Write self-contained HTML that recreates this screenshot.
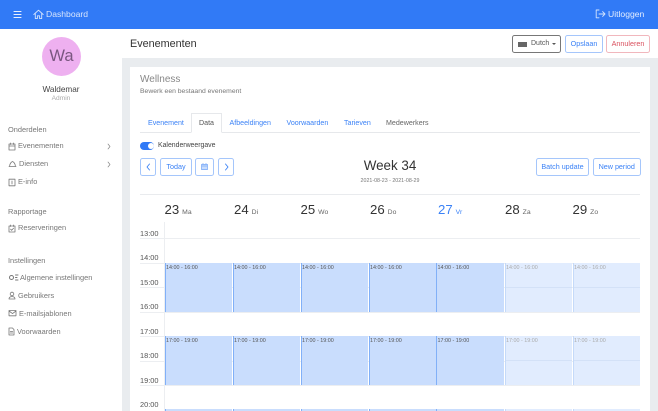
<!DOCTYPE html>
<html><head><meta charset="utf-8">
<style>
*{box-sizing:border-box}
html,body{margin:0;padding:0;width:658px;height:411px;overflow:hidden}
body{position:relative;background:#e9ecef;font-family:"Liberation Sans",sans-serif;color:#333}
.a{position:absolute;white-space:nowrap}
svg{position:absolute;fill:none;stroke-linecap:round;stroke-linejoin:round}
.nav{color:#777;font-size:7.4px;line-height:10px}
.hd{color:#777;font-size:7.4px;line-height:10px}
.btn{position:absolute;border:1px solid #a5c6fb;border-radius:2.5px;color:#3b82f6;font-size:7.2px;text-align:center;background:#fff;white-space:nowrap}
.tab{position:absolute;top:117px;font-size:7.1px;line-height:12px;color:#3b82f6;white-space:nowrap}
.num{position:absolute;top:202px;font-size:13.2px;line-height:16px;color:#333;white-space:nowrap}
.num span{font-size:6.8px;color:#666;margin-left:3px}
.t{position:absolute;left:140px;width:18px;font-size:7.4px;line-height:10px;color:#555}
.l{position:absolute;left:140px;width:500px;height:1px;background:#eceef1}
.e{position:absolute;width:67.5px;height:49px;background:#c9ddfd;border-left:1.5px solid #81b0f8;font-size:5.4px;line-height:8px;color:#555;padding:1px 0 0 .5px;white-space:nowrap;overflow:hidden}
.e.f{background:#e1ecfe;border-left:1px solid #c5daf9;color:#aaa}
.e.f:after{content:"";position:absolute;left:0;right:0;top:24px;height:1px;background:#d3e1f7}
.e.s{height:2px}
.e.s:after{display:none}
</style></head><body>
<div class="a" style="left:0;top:0;width:658px;height:29px;background:#317af6"></div>
<svg style="left:13px;top:10px" width="9" height="9" stroke="#e8f0fe" stroke-width="1.1"><path d="M1 1.5H8M1 4.5H8M1 7.5H8"/></svg>
<svg style="left:33px;top:9px" width="11" height="11" stroke="#d4e4fd" stroke-width=".9"><path d="M.8 5.5 5.5 1.2 10.2 5.5M2.3 4.5V9.6H4.4V6.8H6.6V9.6H8.7V4.5"/></svg>
<div class="a" style="left:46px;top:9px;font-size:8.6px;line-height:11px;color:#d8e6fd">Dashboard</div>
<svg style="left:595px;top:9px" width="11" height="10" stroke="#d4e4fd" stroke-width=".9"><path d="M4 1H1.2V8.8H4M4 5H10M7.6 2.6 10 5 7.6 7.4"/></svg>
<div class="a" style="left:608px;top:8.5px;font-size:8.6px;line-height:11px;color:#e3edfe">Uitloggen</div>

<div class="a" style="left:0;top:29px;width:122px;height:382px;background:#fff"></div>
<div class="a" style="left:42px;top:37px;width:39px;height:39px;border-radius:50%;background:#eeb0f0;color:#7a5680;font-size:16.5px;line-height:39px;text-align:center">Wa</div>
<div class="a" style="left:0;width:122px;top:84px;text-align:center;font-size:8.2px;line-height:11px;color:#444">Waldemar</div>
<div class="a" style="left:0;width:122px;top:94px;text-align:center;font-size:6.6px;line-height:10px;color:#aaa">Admin</div>

<div class="a hd" style="left:8px;top:125px">Onderdelen</div>
<svg style="left:8px;top:142px" width="8" height="9" stroke="#777" stroke-width=".8"><path d="M1 2H7V8H1ZM1 4H7M2.6 1V2.5M5.4 1V2.5"/></svg>
<div class="a nav" style="left:18px;top:141px">Evenementen</div>
<svg style="left:107px;top:143px" width="4" height="7" stroke="#888" stroke-width=".7"><path d="M1 1 3 3.5 1 6"/></svg>
<svg style="left:7.5px;top:160px" width="9" height="8" stroke="#777" stroke-width=".8"><path d="M1 6.5H8M1.6 6.5C1.6 4 3 2 4.5 1.5C6 2 7.4 4 7.4 6.5"/></svg>
<div class="a nav" style="left:19px;top:159px">Diensten</div>
<svg style="left:107px;top:161px" width="4" height="7" stroke="#888" stroke-width=".7"><path d="M1 1 3 3.5 1 6"/></svg>
<svg style="left:8px;top:178px" width="8" height="9" stroke="#777" stroke-width=".8"><path d="M1 1.2H7V7.8H1ZM4 3V6"/></svg>
<div class="a nav" style="left:18px;top:177px">E-info</div>

<div class="a hd" style="left:8px;top:207px">Rapportage</div>
<svg style="left:8px;top:224px" width="8" height="9" stroke="#777" stroke-width=".8"><path d="M1 2H7V8H1ZM2.6 1V2.5M5.4 1V2.5M2.6 5.2 3.7 6.3 5.5 4.2"/></svg>
<div class="a nav" style="left:18px;top:223px">Reserveringen</div>

<div class="a hd" style="left:8px;top:256px">Instellingen</div>
<svg style="left:7.5px;top:273px" width="11" height="9" stroke="#777" stroke-width="1"><circle cx="3.5" cy="4.5" r="2"/><path d="M7.5 2H10M7.5 4.5H9M7.5 7H10"/></svg>
<div class="a nav" style="left:20px;top:273px">Algemene instellingen</div>
<svg style="left:8px;top:291px" width="8" height="9" stroke="#777" stroke-width=".8"><circle cx="4" cy="3" r="1.8"/><path d="M1 8C1 6.2 2.2 5.6 4 5.6S7 6.2 7 8Z"/></svg>
<div class="a nav" style="left:18px;top:291px">Gebruikers</div>
<svg style="left:8px;top:309px" width="9" height="8" stroke="#777" stroke-width=".8"><path d="M1 1.5H8V6.8H1ZM1 2 4.5 4.6 8 2"/></svg>
<div class="a nav" style="left:19px;top:309px">E-mailsjablonen</div>
<svg style="left:8px;top:327px" width="7" height="9" stroke="#777" stroke-width=".8"><path d="M1 1H4.5L6 2.6V8H1ZM2.3 4.5H4.7M2.3 6H4.7"/></svg>
<div class="a nav" style="left:17px;top:327px">Voorwaarden</div>

<div class="a" style="left:122px;top:29px;width:536px;height:29px;background:#fff"></div>
<div class="a" style="left:130px;top:37px;font-size:10.8px;line-height:14px;color:#333">Evenementen</div>
<div class="btn" style="left:512px;top:35px;width:49px;height:18px;border-color:#777"></div>
<div class="a" style="left:518px;top:41.5px;width:9px;height:5px;background:#666"></div>
<div class="a" style="left:531px;top:39px;font-size:7px;line-height:10px;color:#555">Dutch</div>
<div class="a" style="left:552px;top:42.500px;width:0;height:0;border-left:2px solid transparent;border-right:2px solid transparent;border-top:2px solid #555"></div>
<div class="btn" style="left:565px;top:35px;width:38px;height:18px;line-height:16px">Opslaan</div>
<div class="btn" style="left:606px;top:35px;width:44px;height:18px;line-height:16px;border-color:#f1b7bd;color:#d9505e">Annuleren</div>

<div class="a" style="left:130px;top:67px;width:520px;height:344px;background:#fff"></div>
<div class="a" style="left:140px;top:72.5px;font-size:10px;line-height:14px;color:#888">Wellness</div>
<div class="a" style="left:140px;top:87px;font-size:6.8px;line-height:10px;color:#777">Bewerk een bestaand evenement</div>

<div class="a" style="left:140px;top:132px;width:500px;height:1px;background:#e6e8eb"></div>
<div class="a" style="left:190.500px;top:113px;width:31px;height:20px;background:#fff;border:1px solid #e6e8eb;border-bottom:1px solid #fff"></div>
<div class="tab" style="left:148px">Evenement</div>
<div class="tab" style="left:199px;color:#555">Data</div>
<div class="tab" style="left:229.500px">Afbeeldingen</div>
<div class="tab" style="left:286.500px">Voorwaarden</div>
<div class="tab" style="left:344px">Tarieven</div>
<div class="tab" style="left:386px;color:#666">Medewerkers</div>

<div class="a" style="left:140px;top:142px;width:14px;height:8px;border-radius:4px;background:#317af6"></div>
<div class="a" style="left:147.500px;top:143px;width:6px;height:6px;border-radius:50%;background:#fff"></div>
<div class="a" style="left:158px;top:141px;font-size:6.9px;line-height:10px;color:#444">Kalenderweergave</div>

<div class="btn" style="left:140px;top:158px;width:16px;height:18px"></div>
<svg style="left:146px;top:163px" width="5" height="8" stroke="#3b82f6" stroke-width=".9"><path d="M3.5 1 1 4 3.500 7"/></svg>
<div class="btn" style="left:160px;top:158px;width:32px;height:18px;line-height:16px">Today</div>
<div class="btn" style="left:195px;top:158px;width:19px;height:18px"></div>
<svg style="left:200px;top:162px" width="9" height="9" stroke="#8db6f9" stroke-width=".9"><path fill="#c9ddfd" d="M1.500 2.500H7.500V7.500H1.500ZM1.500 4H7.500M3 1.500V2.500M6 1.500V2.500"/></svg>
<div class="btn" style="left:218px;top:158px;width:16px;height:18px"></div>
<svg style="left:224px;top:163px" width="5" height="8" stroke="#3b82f6" stroke-width=".9"><path d="M1.500 1 4 4 1.500 7"/></svg>

<div class="a" style="left:340px;width:100px;top:157px;text-align:center;font-size:13.400px;line-height:18px;color:#333">Week 34</div>
<div class="a" style="left:340px;width:100px;top:177px;text-align:center;font-size:5.300px;line-height:8px;color:#777">2021-08-23 - 2021-08-29</div>
<div class="btn" style="left:536px;top:158px;width:53px;height:18px;line-height:16px">Batch update</div>
<div class="btn" style="left:593px;top:158px;width:47.500px;height:18px;line-height:16px">New period</div>

<div class="a" style="left:140px;top:194px;width:500px;height:1px;background:#e9ebee"></div>
<div class="num" style="left:164.500px">23<span>Ma</span></div>
<div class="num" style="left:234px">24<span>Di</span></div>
<div class="num" style="left:300.500px">25<span>Wo</span></div>
<div class="num" style="left:370px">26<span>Do</span></div>
<div class="num" style="left:438px;color:#3b82f6">27<span style="color:#3b82f6">Vr</span></div>
<div class="num" style="left:505px">28<span>Za</span></div>
<div class="num" style="left:572.500px">29<span>Zo</span></div>

<div class="a" style="left:164px;top:222px;width:1px;height:189px;background:#eceef1"></div>
<div class="l" style="top:238px"></div>
<div class="l" style="top:262.500px"></div>
<div class="l" style="top:287px"></div>
<div class="l" style="top:311.500px"></div>
<div class="l" style="top:336px"></div>
<div class="l" style="top:360.500px"></div>
<div class="l" style="top:385px"></div>
<div class="t" style="top:228.500px">13:00</div>
<div class="t" style="top:253px">14:00</div>
<div class="t" style="top:277.500px">15:00</div>
<div class="t" style="top:302px">16:00</div>
<div class="t" style="top:326.500px">17:00</div>
<div class="t" style="top:351px">18:00</div>
<div class="t" style="top:375.500px">19:00</div>
<div class="t" style="top:400px">20:00</div>

<div class="e" style="left:164.500px;top:263px">14:00 - 16:00</div>
<div class="e" style="left:232.500px;top:263px">14:00 - 16:00</div>
<div class="e" style="left:300.500px;top:263px">14:00 - 16:00</div>
<div class="e" style="left:368.500px;top:263px">14:00 - 16:00</div>
<div class="e" style="left:436px;top:263px">14:00 - 16:00</div>
<div class="e f" style="left:504.500px;top:263px">14:00 - 16:00</div>
<div class="e f" style="left:572.500px;top:263px">14:00 - 16:00</div>

<div class="e" style="left:164.500px;top:336px">17:00 - 19:00</div>
<div class="e" style="left:232.500px;top:336px">17:00 - 19:00</div>
<div class="e" style="left:300.500px;top:336px">17:00 - 19:00</div>
<div class="e" style="left:368.500px;top:336px">17:00 - 19:00</div>
<div class="e" style="left:436px;top:336px">17:00 - 19:00</div>
<div class="e f" style="left:504.500px;top:336px">17:00 - 19:00</div>
<div class="e f" style="left:572.500px;top:336px">17:00 - 19:00</div>

<div class="e s" style="left:164.500px;top:409px"></div>
<div class="e s" style="left:232.500px;top:409px"></div>
<div class="e s" style="left:300.500px;top:409px"></div>
<div class="e s" style="left:368.500px;top:409px"></div>
<div class="e s" style="left:436px;top:409px"></div>
<div class="e f s" style="left:504.500px;top:409px"></div>
<div class="e f s" style="left:572.500px;top:409px"></div>
</body></html>
